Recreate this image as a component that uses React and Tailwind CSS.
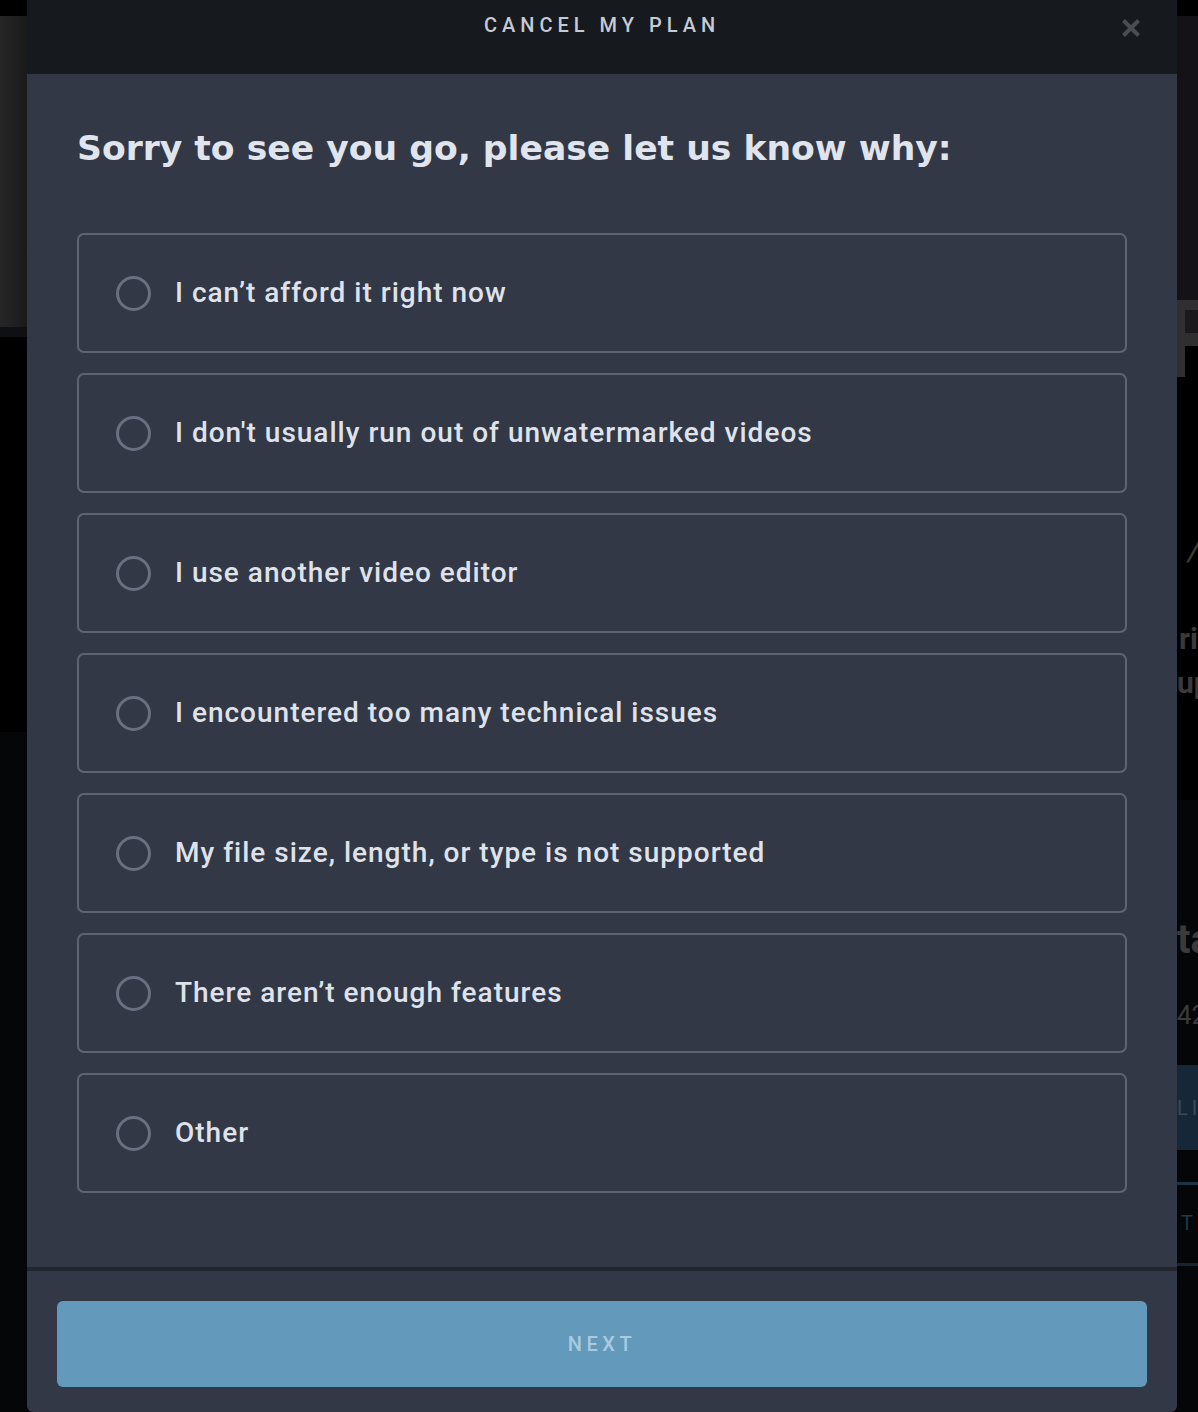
import React from "react";

const options = [
  "I can\u2019t afford it right now",
  "I don't usually run out of unwatermarked videos",
  "I use another video editor",
  "I encountered too many technical issues",
  "My file size, length, or type is not supported",
  "There aren\u2019t enough features",
  "Other",
];

function LeftStrip() {
  return (
    <div className="w-[27px] shrink-0 flex flex-col">
      <div className="h-[16px] bg-black" />
      <div className="h-[311px] bg-gradient-to-r from-[#262626] to-[#1a1a1a]" />
      <div className="h-[10px] bg-[#0e1013]" />
      <div className="h-[395px] bg-black" />
      <div className="flex-1 bg-[#050608]" />
    </div>
  );
}

function RightStrip() {
  const ghost = "whitespace-nowrap leading-none font-bold text-[#3a3a3a]";
  return (
    <div className="w-[21px] shrink-0 flex flex-col overflow-hidden">
      <div className="h-[16px] shrink-0 bg-black" />
      <div className="h-[284px] shrink-0 bg-[#141216]" />
      <div className="h-[77px] shrink-0 bg-[#2f2f2f] flex flex-col pl-[8px] pt-[10px]">
        <div className="h-[23px] bg-[#1b191c]" />
        <div className="h-[13px]" />
        <div className="flex-1 bg-black" />
      </div>
      <div className="h-[423px] shrink-0 bg-black flex flex-col pl-[2px]">
        <div className={`mt-[155px] pl-[9px] text-[34px] italic font-normal ${ghost}`}>/</div>
        <div className={`mt-[58px] text-[30px] ${ghost}`}>ri</div>
        <div className={`mt-[14px] -ml-[2px] text-[30px] ${ghost}`}>up</div>
      </div>
      <div className="flex-1 bg-[#050608] flex flex-col">
        <div className={`mt-[120px] text-[40px] ${ghost}`}>ta</div>
        <div className="mt-[42px] text-[26px] leading-none text-[#3a3a3a] whitespace-nowrap">42</div>
        <div className="mt-[37px] h-[85px] bg-[#162838] flex items-center">
          <span className="text-[20px] tracking-[4px] text-[#3b4a55] whitespace-nowrap">LI</span>
        </div>
        <div className="mt-[32px] h-[3px] bg-[#1c3346]" />
        <div className="mt-[28px] pl-[4px] text-[20px] leading-none text-[#1f3a50]">T</div>
        <div className="mt-[30px] h-[3px] bg-[#152433]" />
      </div>
    </div>
  );
}

export default function App() {
  return (
    <div
      className="w-[1198px] h-[1412px] overflow-hidden bg-black flex"
      style={{ fontFamily: "Roboto, 'Liberation Sans', sans-serif" }}
    >
      <LeftStrip />
      <div className="w-[1150px] h-[1412px] shrink-0 flex flex-col rounded-b-[6px] overflow-hidden">
        {/* header */}
        <div className="relative h-[74px] shrink-0 bg-[#16191e] flex justify-center">
          <div className="pt-[11px] text-[20px] leading-[28px] tracking-[5px] text-[#c5cad3] font-medium">
            CANCEL MY PLAN
          </div>
          <button className="absolute right-[36px] top-[18px] w-[20px] h-[20px] flex items-center justify-center">
            <svg width="20" height="20" viewBox="0 0 20 20">
              <path
                d="M2.5 2.5 L17.5 17.5 M17.5 2.5 L2.5 17.5"
                stroke="#4a4e54"
                strokeWidth="4"
                strokeLinecap="butt"
              />
            </svg>
          </button>
        </div>

        {/* body */}
        <div className="flex-1 bg-[#323845] px-[50px] pt-[52px]">
          <h1
            className="text-[34.6px] leading-[44px] font-bold text-[#e0e4ed]"
            style={{ fontFamily: "'DejaVu Sans', 'Open Sans', sans-serif" }}
          >
            Sorry to see you go, please let us know why:
          </h1>
          <div className="mt-[63px] flex flex-col gap-[20px]">
            {options.map((o) => (
              <label
                key={o}
                className="h-[120px] border-2 border-[#5d6474] rounded-[7px] flex items-center pl-[37px] cursor-pointer"
              >
                <span className="w-[35px] h-[35px] rounded-full border-[3px] border-[#687082] shrink-0" />
                <span className="ml-[24px] text-[28px] leading-none font-medium text-[#dfe2ea] tracking-[1px]">
                  {o}
                </span>
              </label>
            ))}
          </div>
        </div>

        {/* divider */}
        <div className="h-[4px] shrink-0 bg-[#24262f]" />

        {/* footer */}
        <div className="h-[141px] shrink-0 bg-[#323845] px-[30px] pt-[30px]">
          <button className="w-full h-[86px] rounded-[6px] bg-[#6399ba] flex items-center justify-center">
            <span className="text-[20px] tracking-[4.5px] text-[#a9cbe0] font-medium">
              NEXT
            </span>
          </button>
        </div>
      </div>
      <RightStrip />
    </div>
  );
}
